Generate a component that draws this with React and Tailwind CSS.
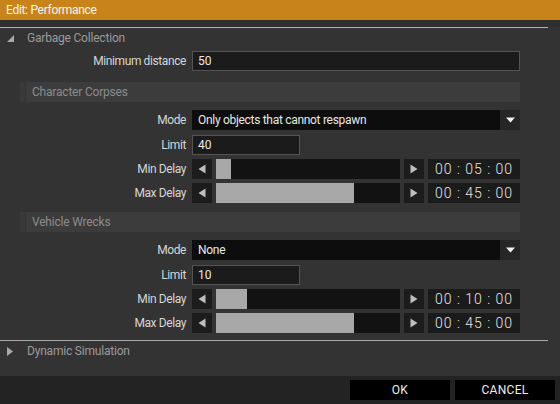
import React from 'react';

const font = { fontFamily: 'Roboto, "Liberation Sans", sans-serif' };

const Row = ({ label, children, className = '' }) => (
  <div className={`flex items-center h-[20px] ${className}`}>
    <div className="w-[186px] text-right text-[12px] text-[#d6d6d6] tracking-[-0.4px]">{label}</div>
    <div className="ml-[6px] w-[328px] h-[20px] flex">{children}</div>
  </div>
);

const SectionHeader = ({ title, className = '' }) => (
  <div className={`ml-[20px] w-[500px] h-[20px] flex bg-[#3c3c3c] ${className}`}>
    <div className="w-[6px] h-full bg-[#393939] border-r border-[#343434]" />
    <div className="pl-[6px] leading-[20px] text-[12px] text-[#8c8c8c] tracking-[-0.2px]">{title}</div>
  </div>
);

const Arrow = ({ dir }) => (
  <svg width="8" height="10" viewBox="0 0 8 10">
    {dir === 'left' ? (
      <polygon points="7.5,0.5 7.5,9.5 0.5,5" fill="#bdbdbd" />
    ) : (
      <polygon points="0.5,0.5 0.5,9.5 7.5,5" fill="#bdbdbd" />
    )}
  </svg>
);

const Slider = ({ fill, time }) => (
  <div className="flex w-full h-[20px] gap-[4px]">
    <div className="w-[20px] h-full bg-[#1c1c1c] flex items-center justify-center"><Arrow dir="left" /></div>
    <div className="flex-1 h-full bg-[#121212] flex">
      <div className="h-full bg-[#a8a8a8]" style={{ width: fill }} />
    </div>
    <div className="w-[20px] h-full bg-[#1c1c1c] flex items-center justify-center"><Arrow dir="right" /></div>
    <div className="w-[92px] h-full bg-[#1b1b1b] flex items-center justify-center text-[14px] text-[#e6e6e6] tracking-[1px] font-light whitespace-pre">
      {time}
    </div>
  </div>
);

const Select = ({ value }) => (
  <div className="flex w-full h-[20px]">
    <div className="flex-1 bg-[#0d0d0d] pl-[6px] leading-[20px] text-[12px] text-[#e8e8e8] tracking-[-0.3px]">{value}</div>
    <div className="w-[20px] bg-[#262626] flex items-center justify-center">
      <svg width="9" height="6" viewBox="0 0 9 6"><polygon points="0,0.5 9,0.5 4.5,5.5" fill="#f2f2f2" /></svg>
    </div>
  </div>
);

const Input = ({ value, width }) => (
  <div className={`${width} h-[20px] bg-[#1b1b1b] border border-[#545454] pl-[5px] leading-[18px] text-[12px] text-[#e8e8e8]`}>
    {value}
  </div>
);

const Group = ({ title, mode, limit, minFill, minTime, maxFill, maxTime, className = '' }) => (
  <div className={className}>
    <SectionHeader title={title} />
    <div className="mt-[8px] flex flex-col gap-[4px]">
      <Row label="Mode"><Select value={mode} /></Row>
      <Row label="Limit" className="mt-[1px]"><Input value={limit} width="w-[108px]" /></Row>
      <Row label="Min Delay"><Slider fill={minFill} time={minTime} /></Row>
      <Row label="Max Delay"><Slider fill={maxFill} time={maxTime} /></Row>
    </div>
  </div>
);

export default function App() {
  return (
    <div className="w-[560px] h-[404px] bg-[#333333] flex flex-col overflow-hidden" style={font}>
      {/* Title */}
      <div className="h-[20px] bg-[#c8841b] px-[6px] leading-[20px] text-[12px] text-[#f4f4f4] tracking-[-0.3px]">
        Edit: Performance
      </div>
      <div className="h-[7px] bg-[#2e2f30]" />
      <div className="h-px w-[548px] bg-[#aab3b6]" />
      <div className="h-px w-[548px] bg-[#3b3438]" />

      {/* Content */}
      <div className="flex-1 flex flex-col">
        <div className="h-[18px] flex items-center">
          <svg className="ml-[7px]" width="7" height="7" viewBox="0 0 7 7"><polygon points="7,0 7,7 0,7" fill="#a9a9a9" /></svg>
          <span className="ml-[13px] text-[12px] text-[#9b9b9b] tracking-[-0.2px]">Garbage Collection</span>
        </div>
        <Row label="Minimum distance" className="mt-[4px]">
          <Input value="50" width="w-[328px]" />
        </Row>

        <Group
          className="mt-[11px]"
          title="Character Corpses"
          mode="Only objects that cannot respawn"
          limit="40"
          minFill="15px"
          minTime="00 : 05 : 00"
          maxFill="138px"
          maxTime="00 : 45 : 00"
        />
        <Group
          className="mt-[9px]"
          title="Vehicle Wrecks"
          mode="None"
          limit="10"
          minFill="31px"
          minTime="00 : 10 : 00"
          maxFill="138px"
          maxTime="00 : 45 : 00"
        />

        <div className="mt-[7px] h-px w-[548px] bg-[#a9a9a9]" />
        <div className="h-[20px] flex items-center">
          <svg className="ml-[7px]" width="6" height="9" viewBox="0 0 6 9"><polygon points="0,0 6,4.5 0,9" fill="#a9a9a9" /></svg>
          <span className="ml-[14px] text-[12px] text-[#9b9b9b] tracking-[-0.2px]">Dynamic Simulation</span>
        </div>
      </div>

      {/* Footer */}
      <div className="h-[28px] bg-[#232323] flex justify-end items-center gap-[5px] pr-[5px]">
        <button className="w-[100px] h-[20px] bg-black text-[12px] text-[#eeeeee] tracking-[0.3px]">OK</button>
        <button className="w-[100px] h-[20px] bg-black text-[12px] text-[#eeeeee] tracking-[0.3px]">CANCEL</button>
      </div>
    </div>
  );
}
